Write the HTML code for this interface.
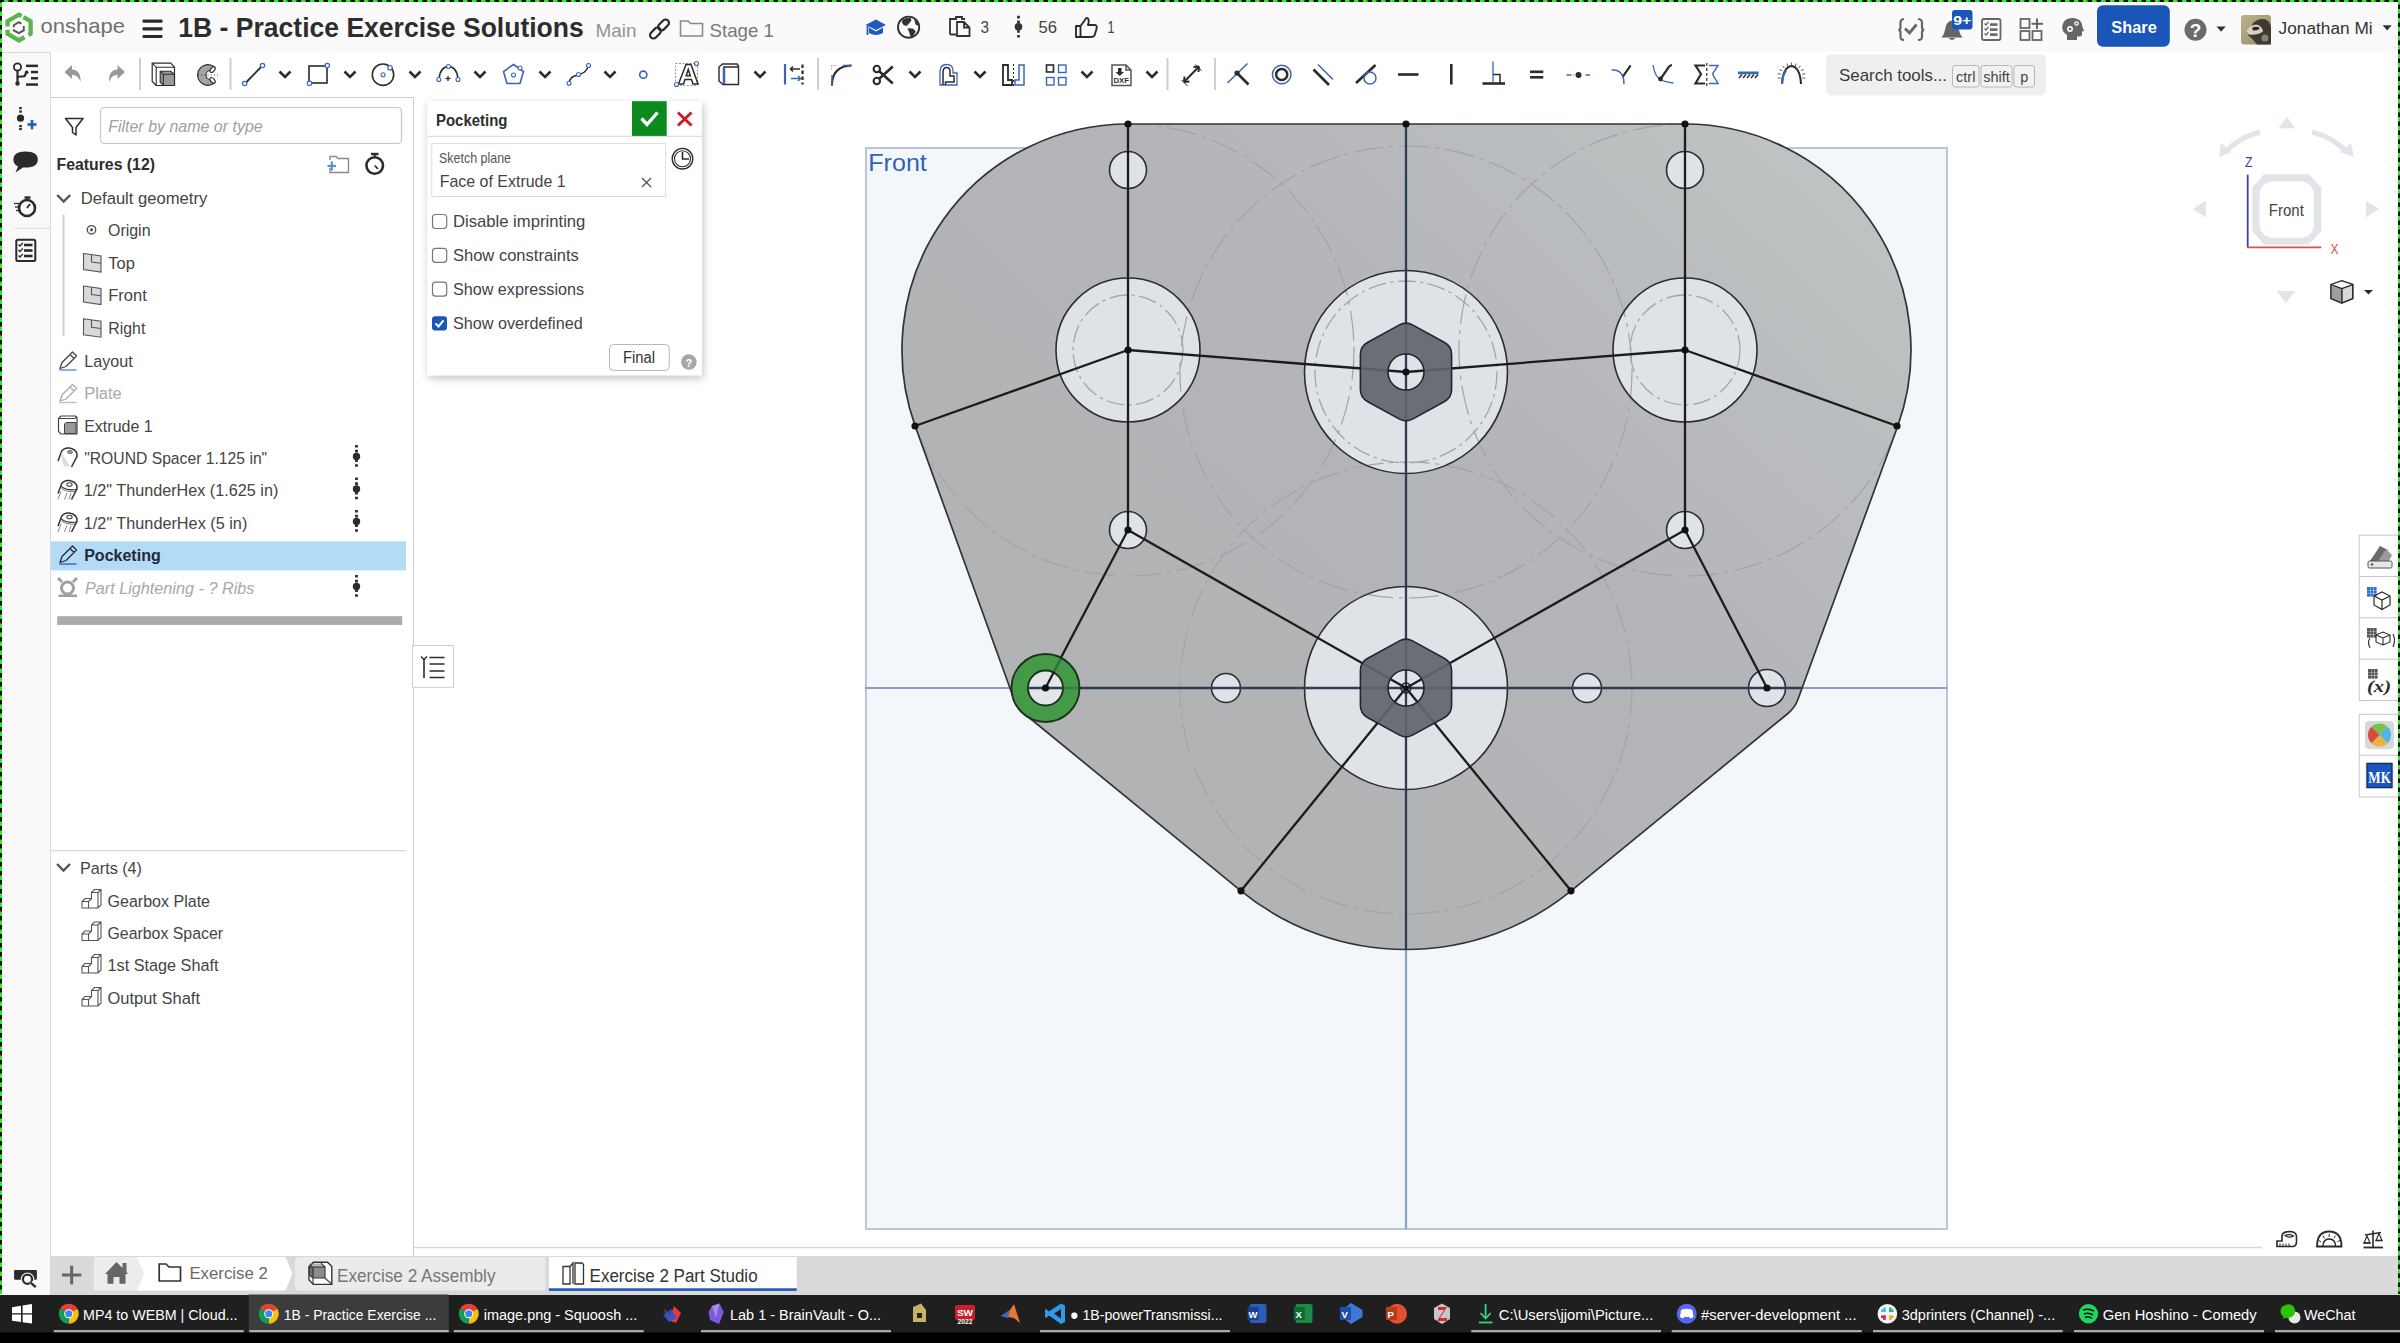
<!DOCTYPE html>
<html><head><meta charset="utf-8">
<style>
*{box-sizing:border-box;margin:0;padding:0}
html,body{width:2400px;height:1343px;overflow:hidden;background:#fff;font-family:"Liberation Sans",sans-serif;color:#333}
.a{position:absolute}
#hdr{left:0;top:0;width:2400px;height:52px;background:#fafafa}
#tb{left:51px;top:52px;width:2349px;height:46px;background:#fff}
#lstrip{left:0;top:52px;width:51px;height:1243px;background:#f9f9f9;border-right:1px solid #d9d9d9;border-top:1px solid #d9d9d9}
#fpanel{left:51px;top:97px;width:363px;height:1159px;background:#fff;border-right:1.5px solid #cdcdcd;border-top:1px solid #cdcdcd}
#tabbar{left:51px;top:1256px;width:2349px;height:39px;background:#d9d9d9}
#task{left:0;top:1295px;width:2400px;height:48px;background:#1f1f1f}
#frame{left:0;top:0;width:2400px;height:1343px;pointer-events:none}
</style></head><body>
<div id="hdr" class="a"></div>
<div id="tb" class="a"></div>
<div id="lstrip" class="a"></div>
<div id="fpanel" class="a"></div>
<div id="tabbar" class="a"></div>
<div id="task" class="a"></div>
<svg class="a" style="left:0;top:0" width="2400" height="1343" viewBox="0 0 2400 1343">
<defs>
<linearGradient id="pg" x1="0.25" y1="0.7" x2="1" y2="0.05"><stop offset="0" stop-color="#b2b3b5"/><stop offset="0.45" stop-color="#b3b5b8"/><stop offset="1" stop-color="#c1c4c5"/></linearGradient>
<clipPath id="pc"><path d="M1128,124 L1685,124 A226,226 0 0 1 1897.7,426.3 L1798.0,699.3 A33,33 0 0 1 1787.9,713.5 L1571.1,890.8 A261.5,261.5 0 0 1 1240.9,890.8 L1024.1,713.5 A33,33 0 0 1 1014.0,699.2 L915.1,425.9 A226,226 0 0 1 1128,124 Z"/></clipPath>
</defs>
<rect x="866" y="148" width="1081" height="1081" fill="#f4f7f9" stroke="#b6c6e0" stroke-width="2"/>
<text x="868.3" y="171" font-family="Liberation Sans" font-size="24" fill="#2f62b9" textLength="58.5" lengthAdjust="spacingAndGlyphs">Front</text>
<line x1="865" y1="688" x2="1947" y2="688" stroke="#88a2c4" stroke-width="2.2"/>
<line x1="1406" y1="124" x2="1406" y2="1229" stroke="#88a2c4" stroke-width="2.2"/>
<path d="M1128,124 L1685,124 A226,226 0 0 1 1897.7,426.3 L1798.0,699.3 A33,33 0 0 1 1787.9,713.5 L1571.1,890.8 A261.5,261.5 0 0 1 1240.9,890.8 L1024.1,713.5 A33,33 0 0 1 1014.0,699.2 L915.1,425.9 A226,226 0 0 1 1128,124 Z" fill="url(#pg)"/>
<circle cx="1128" cy="170" r="18.5" fill="#dfe2e7"/>
<circle cx="1685" cy="170" r="18.5" fill="#dfe2e7"/>
<circle cx="1128" cy="530" r="18.5" fill="#dfe2e7"/>
<circle cx="1685" cy="530" r="18.5" fill="#dfe2e7"/>
<circle cx="1767" cy="688" r="18.5" fill="#dfe2e7"/>
<circle cx="1226" cy="688" r="14.5" fill="#dfe2e7"/>
<circle cx="1587" cy="688" r="14.5" fill="#dfe2e7"/>
<circle cx="1128" cy="350" r="72" fill="#dfe2e7"/>
<circle cx="1685" cy="350" r="72" fill="#dfe2e7"/>
<circle cx="1406" cy="372" r="101.5" fill="#dfe2e7"/>
<circle cx="1406" cy="688" r="101.5" fill="#dfe2e7"/>
<g clip-path="url(#pc)" fill="none" stroke="#a2a4a7" stroke-width="1.2" stroke-dasharray="30 6 4 6">
<circle cx="1128" cy="350" r="226"/>
<circle cx="1685" cy="350" r="226"/>
<circle cx="1406" cy="372" r="226"/>
<circle cx="1406" cy="688" r="226"/>
</g>
<g fill="none" stroke="#a3a5a8" stroke-width="1.3" stroke-dasharray="18 4.5 3 4.5">
<circle cx="1128" cy="350" r="55"/>
<circle cx="1685" cy="350" r="55"/>
<circle cx="1406" cy="372" r="91"/>
</g>
<circle cx="1128" cy="170" r="18.5" fill="none" stroke="#2b2d30" stroke-width="1.6"/>
<circle cx="1685" cy="170" r="18.5" fill="none" stroke="#2b2d30" stroke-width="1.6"/>
<circle cx="1128" cy="530" r="18.5" fill="none" stroke="#2b2d30" stroke-width="1.6"/>
<circle cx="1685" cy="530" r="18.5" fill="none" stroke="#2b2d30" stroke-width="1.6"/>
<circle cx="1767" cy="688" r="18.5" fill="none" stroke="#2b2d30" stroke-width="1.6"/>
<circle cx="1226" cy="688" r="14.5" fill="none" stroke="#2b2d30" stroke-width="1.6"/>
<circle cx="1587" cy="688" r="14.5" fill="none" stroke="#2b2d30" stroke-width="1.6"/>
<circle cx="1128" cy="350" r="72" fill="none" stroke="#2b2d30" stroke-width="1.6"/>
<circle cx="1685" cy="350" r="72" fill="none" stroke="#2b2d30" stroke-width="1.6"/>
<circle cx="1406" cy="372" r="101.5" fill="none" stroke="#2b2d30" stroke-width="1.6"/>
<circle cx="1406" cy="688" r="101.5" fill="none" stroke="#2b2d30" stroke-width="1.6"/>
<path d="M1128,124 L1685,124 A226,226 0 0 1 1897.7,426.3 L1798.0,699.3 A33,33 0 0 1 1787.9,713.5 L1571.1,890.8 A261.5,261.5 0 0 1 1240.9,890.8 L1024.1,713.5 A33,33 0 0 1 1014.0,699.2 L915.1,425.9 A226,226 0 0 1 1128,124 Z" fill="none" stroke="#323336" stroke-width="1.7"/>
<g clip-path="url(#pc)"><line x1="865" y1="688" x2="1947" y2="688" stroke="#2e3c54" stroke-width="2.3"/>
<line x1="1406" y1="124" x2="1406" y2="1229" stroke="#2e3c54" stroke-width="2.3"/></g>
<g stroke="#1c1c1e" stroke-width="2.3" stroke-linecap="round">
<line x1="1128" y1="124" x2="1128" y2="530"/>
<line x1="1685" y1="124" x2="1685" y2="530"/>
<line x1="915" y1="426" x2="1128" y2="350"/>
<line x1="1128" y1="350" x2="1406" y2="372"/>
<line x1="1406" y1="372" x2="1685" y2="350"/>
<line x1="1685" y1="350" x2="1897" y2="426"/>
<line x1="1128" y1="530" x2="1406" y2="688"/>
<line x1="1685" y1="530" x2="1406" y2="688"/>
<line x1="1128" y1="530" x2="1045" y2="688"/>
<line x1="1685" y1="530" x2="1767" y2="688"/>
<line x1="1406" y1="688" x2="1241" y2="890.8"/>
<line x1="1406" y1="688" x2="1571" y2="890.8"/>
</g>
<path d="M1399.0,325.1 Q1406.0,321.2 1413.0,325.1 L1444.6,342.5 Q1451.6,346.4 1451.6,354.4 L1451.6,389.6 Q1451.6,397.6 1444.6,401.5 L1413.0,418.9 Q1406.0,422.8 1399.0,418.9 L1367.4,401.5 Q1360.4,397.6 1360.4,389.6 L1360.4,354.4 Q1360.4,346.4 1367.4,342.5 Z M1424,372 A18,18 0 1 0 1388,372 A18,18 0 1 0 1424,372 Z" fill="#5f646b" fill-opacity="0.92" fill-rule="evenodd" stroke="#23262a" stroke-width="1.6"/>
<path d="M1399.0,641.1 Q1406.0,637.2 1413.0,641.1 L1444.6,658.5 Q1451.6,662.4 1451.6,670.4 L1451.6,705.6 Q1451.6,713.6 1444.6,717.5 L1413.0,734.9 Q1406.0,738.8 1399.0,734.9 L1367.4,717.5 Q1360.4,713.6 1360.4,705.6 L1360.4,670.4 Q1360.4,662.4 1367.4,658.5 Z M1424,688 A18,18 0 1 0 1388,688 A18,18 0 1 0 1424,688 Z" fill="#5f646b" fill-opacity="0.92" fill-rule="evenodd" stroke="#23262a" stroke-width="1.6"/>
<circle cx="1406" cy="688" r="5" fill="none" stroke="#222" stroke-width="1.4"/>
<circle cx="1045.5" cy="688" r="18" fill="#e3e5e9"/>
<path d="M1079.5,688 A34,34 0 1 0 1011.5,688 A34,34 0 1 0 1079.5,688 Z M1063,688 A17.5,17.5 0 1 0 1028,688 A17.5,17.5 0 1 0 1063,688 Z" fill="#449a47" fill-rule="evenodd" stroke="#1b331c" stroke-width="1.9"/>
<line x1="1053.6" y1="672.5" x2="1061.2" y2="657.9" stroke="#1c1c1e" stroke-width="2.3" stroke-opacity="0.35"/>
<line x1="1045.5" y1="688" x2="1053.6" y2="672.5" stroke="#1c1c1e" stroke-width="2.3"/>
<line x1="1028" y1="688" x2="1063" y2="688" stroke="#2e3c54" stroke-width="2.3"/>
<line x1="1063" y1="688" x2="1079.5" y2="688" stroke="#2e3c54" stroke-width="2.3" stroke-opacity="0.35"/>
<circle cx="1128" cy="124" r="3.6" fill="#111"/>
<circle cx="1406" cy="124" r="3.6" fill="#111"/>
<circle cx="1685" cy="124" r="3.6" fill="#111"/>
<circle cx="1128" cy="350" r="3.6" fill="#111"/>
<circle cx="1685" cy="350" r="3.6" fill="#111"/>
<circle cx="915" cy="426" r="3.6" fill="#111"/>
<circle cx="1897" cy="426" r="3.6" fill="#111"/>
<circle cx="1128" cy="530" r="3.6" fill="#111"/>
<circle cx="1685" cy="530" r="3.6" fill="#111"/>
<circle cx="1045.5" cy="688" r="3.6" fill="#111"/>
<circle cx="1767" cy="688" r="3.6" fill="#111"/>
<circle cx="1406" cy="372" r="3.6" fill="#111"/>
<circle cx="1241" cy="890.8" r="3.6" fill="#111"/>
<circle cx="1571" cy="890.8" r="3.6" fill="#111"/>
<circle cx="1406" cy="688" r="2.2" fill="#111"/>
</svg>
<svg class="a" style="left:0;top:0" width="2400" height="1343" viewBox="0 0 2400 1343" font-family="Liberation Sans">
<path d="M7.6,26.5 L7.6,21.2 L19,14.6 L21.5,16" fill="none" stroke="#5bb350" stroke-width="4.3" stroke-linejoin="miter"/>
<path d="M23.5,17.2 L30.6,21.2 L30.6,33.8 L28.5,35" fill="none" stroke="#5bb350" stroke-width="4.3" stroke-linejoin="miter"/>
<path d="M7.6,29.8 L7.6,33.8 L19,40.4 L24.5,37.2" fill="none" stroke="#5bb350" stroke-width="4.3" stroke-linejoin="miter"/>
<path d="M13.8,27.2 L13.8,25.2 L18.8,22.2 L21.5,23.8" fill="none" stroke="#555" stroke-width="1.9" />
<path d="M23.8,26 L23.8,30.4 L18.8,33.2 L13.8,30.4 L13.8,29.2" fill="none" stroke="#555" stroke-width="1.9" />
<text x="40.5" y="32.8" font-size="21" fill="#707070" textLength="84.5" lengthAdjust="spacingAndGlyphs" >onshape</text>
<rect x="142.5" y="19.5" width="20" height="3.2" fill="#2b2b2b" rx="1"/>
<rect x="142.5" y="27.299999999999997" width="20" height="3.2" fill="#2b2b2b" rx="1"/>
<rect x="142.5" y="34.9" width="20" height="3.2" fill="#2b2b2b" rx="1"/>
<text x="178.3" y="36.9" font-size="27.2" fill="#2d2d2d" font-weight="bold" textLength="405.5" lengthAdjust="spacingAndGlyphs" >1B - Practice Exercise Solutions</text>
<text x="595.5" y="36.8" font-size="19" fill="#8e949a" textLength="41" lengthAdjust="spacingAndGlyphs" >Main</text>
<g transform="rotate(-45 659.5 29)" fill="none" stroke="#2b2b2b" stroke-width="2.2"><rect x="647.5" y="25.6" width="12.5" height="6.8" rx="3.4"/><rect x="659" y="25.6" width="12.5" height="6.8" rx="3.4"/></g>
<path d="M680.5,36 L680.5,21 L688,21 L690.5,23.5 L702.5,23.5 L702.5,36 Z" fill="none" stroke="#8a8a8a" stroke-width="1.6" />
<text x="709.5" y="36.8" font-size="18.6" fill="#787878" textLength="64.5" lengthAdjust="spacingAndGlyphs" >Stage 1</text>
<path d="M865.5,25 L876,19.5 L886,25 L876,30 Z" fill="#1f5bbf" stroke="none" stroke-width="1" />
<path d="M869,27.5 L869,33 Q876,37 883,33 L883,27.5 L876,31.5 Z" fill="#1f5bbf" stroke="none" stroke-width="1" />
<line x1="867.5" y1="26" x2="867.5" y2="35" stroke="#1f5bbf" stroke-width="1.8" />
<circle cx="908.6" cy="27.2" r="10.6" fill="none" stroke="#333" stroke-width="1.9" />
<path d="M902.5,19.8 Q906,17.3 910.5,17.8 L911.5,20.5 L909,23.5 L906.5,26 L903.5,25 L902,22.5 Z" fill="#333" stroke="none" stroke-width="1" />
<path d="M907.5,28.2 L912.8,28.5 L915.8,31.2 L913.5,35.5 L910.8,37.3 L909.5,33.2 Z" fill="#333" stroke="none" stroke-width="1" />
<path d="M914.2,19.5 L917.5,22.5 L918.5,26 L915.5,24.5 Z" fill="#333" stroke="none" stroke-width="1" />
<path d="M950,34.5 L950,19 L956,19 L956,17 L962,17 L962,19 L965,19 M957,22 L964,22 L969.5,27.5 L969.5,36 L957,36 Z M964,22 L964,27.5 L969.5,27.5 M950,34.5 L957,34.5" fill="none" stroke="#333" stroke-width="1.8" />
<text x="980.5" y="33.3" font-size="16" fill="#444" textLength="8.5" lengthAdjust="spacingAndGlyphs" >3</text>
<line x1="1018.5" y1="15.8" x2="1018.5" y2="38" stroke="#333" stroke-width="2.8" stroke-dasharray="2.6 2.2"/>
<circle cx="1018.5" cy="26.8" r="3.8" fill="#333" stroke="none" stroke-width="1" />
<text x="1038.5" y="33.3" font-size="16" fill="#444" textLength="18.5" lengthAdjust="spacingAndGlyphs" >56</text>
<path d="M1076,26 L1080.5,26 L1080.5,37 L1076,37 Z M1080.5,26 L1085,20 Q1086,17 1088,18.5 Q1089.5,20.5 1088,25 L1095,25 Q1097.5,25.5 1096.5,29 L1094.5,35.5 Q1093.5,37 1091,37 L1080.5,37" fill="none" stroke="#2b2b2b" stroke-width="1.9" stroke-linejoin="round"/>
<text x="1107.5" y="33.3" font-size="16" fill="#444" textLength="7" lengthAdjust="spacingAndGlyphs" >1</text>
<path d="M1904,19 Q1900,19 1900.5,24 L1900.5,27.5 Q1900.5,29.5 1898.5,29.8 Q1900.5,30.2 1900.5,32 L1900.5,36 Q1900,40 1904,40 M1918,19 Q1922.5,19 1922,24 L1922,27.5 Q1922,29.5 1924,29.8 Q1922,30.2 1922,32 L1922,36 Q1922.5,40 1918,40" fill="none" stroke="#666" stroke-width="2.2" />
<path d="M1905,28.5 L1909.5,33 L1916.5,24.5" fill="none" stroke="#666" stroke-width="2.8" />
<path d="M1941.5,37.5 Q1944,35 1945,30 Q1946,21 1952,20.5 Q1958,21 1959,30 Q1960,35 1962.5,37.5 Z" fill="#666" stroke="none" stroke-width="1" />
<path d="M1948.5,38 Q1952,42 1955.5,38 Z" fill="#666" stroke="none" stroke-width="1" />
<rect x="1952" y="10" width="20.5" height="19.5" fill="#1a55b8" rx="3"/>
<text x="1953.3" y="25" font-size="13" fill="#fff" font-weight="bold" textLength="18" lengthAdjust="spacingAndGlyphs" >9+</text>
<rect x="1982" y="19" width="18.5" height="21" fill="none" stroke="#666" stroke-width="1.8" rx="2"/>
<path d="M1984.5,23.5 L1986,25.0 L1988.5,22.0" fill="none" stroke="#666" stroke-width="1.2" />
<rect x="1990" y="23.3" width="7.5" height="2.6" fill="#666" />
<path d="M1984.5,28.5 L1986,30.0 L1988.5,27.0" fill="none" stroke="#666" stroke-width="1.2" />
<rect x="1990" y="28.3" width="7.5" height="2.6" fill="#666" />
<path d="M1984.5,33.5 L1986,35.0 L1988.5,32.0" fill="none" stroke="#666" stroke-width="1.2" />
<rect x="1990" y="33.3" width="7.5" height="2.6" fill="#666" />
<rect x="2020.5" y="19" width="9" height="9" fill="none" stroke="#666" stroke-width="1.8"/>
<rect x="2020.5" y="31" width="9" height="9" fill="none" stroke="#666" stroke-width="1.8"/>
<rect x="2032.5" y="31" width="9" height="9" fill="none" stroke="#666" stroke-width="1.8"/>
<line x1="2037" y1="18.5" x2="2037" y2="29" stroke="#666" stroke-width="2" />
<line x1="2031.5" y1="23.8" x2="2043" y2="23.8" stroke="#666" stroke-width="2" />
<path d="M2067,40 L2067,35 Q2061,31 2062.5,25 Q2064.5,17.5 2073,18 Q2082,18.5 2082.5,27 L2084,31 L2082,31.5 L2082,35 Q2081.5,37 2077,36.5 L2077,40 Z" fill="#666" stroke="none" stroke-width="1" />
<circle cx="2070" cy="29" r="3" fill="#fafafa" stroke="none" stroke-width="1" />
<circle cx="2070" cy="29" r="1.3" fill="#666" stroke="none" stroke-width="1" />
<circle cx="2076.5" cy="23.5" r="2.3" fill="#fafafa" stroke="none" stroke-width="1" />
<circle cx="2076.5" cy="23.5" r="1" fill="#666" stroke="none" stroke-width="1" />
<rect x="2097" y="5.2" width="72.8" height="41.6" fill="#1a55b8" rx="6"/>
<text x="2111.3" y="32.9" font-size="16.8" fill="#fff" font-weight="bold" textLength="45.5" lengthAdjust="spacingAndGlyphs" >Share</text>
<circle cx="2195.5" cy="29.7" r="11" fill="#6b6b6b" stroke="none" stroke-width="1" />
<text x="2195.5" y="36.5" font-size="19" fill="#fff" font-weight="bold" text-anchor="middle" >?</text>
<path d="M2216.5,26.5 L2225.7,26.5 L2221.1,31.7 Z" fill="#333" stroke="none" stroke-width="1" />
<defs><linearGradient id="av" x1="0" y1="0" x2="1" y2="1"><stop offset="0" stop-color="#bcb48c"/><stop offset="0.6" stop-color="#a39c78"/><stop offset="1" stop-color="#7c7862"/></linearGradient></defs>
<rect x="2241" y="14.9" width="30" height="29.7" fill="url(#av)" rx="3"/>
<path d="M2253,23 Q2259,17.5 2266,19.5 Q2272,23 2271,33 L2271,44.6 L2257,44.6 Q2253,39 2248,35 Z" fill="#3d3a33" stroke="none" stroke-width="1" />
<path d="M2246.5,31 Q2249.5,25.5 2256,24.5 Q2262,25.5 2263,31.5 Q2257,35.5 2249,34.5 Z" fill="#d8d2bf" stroke="none" stroke-width="1" />
<path d="M2252,28 Q2256,25.5 2260,28 Q2258,31 2253,30.5 Z" fill="#2a2824" stroke="none" stroke-width="1" />
<circle cx="2265" cy="38" r="3.5" fill="#9a9585" stroke="none" stroke-width="1" opacity="0.8"/>
<text x="2278.6" y="33.9" font-size="17.3" fill="#333" textLength="94" lengthAdjust="spacingAndGlyphs" >Jonathan Mi</text>
<path d="M2382.6,25.2 L2391.7,25.2 L2387.15,30.4 Z" fill="#333" stroke="none" stroke-width="1" />
<circle cx="17.5" cy="67" r="3.6" fill="none" stroke="#2b2b2b" stroke-width="1.8" />
<line x1="17.5" y1="70.5" x2="17.5" y2="83" stroke="#2b2b2b" stroke-width="2.2" />
<path d="M17.5,78 Q17.5,76.5 20,76.5 L23,76.5 Q25,76.5 25.5,74 L26.5,72" fill="none" stroke="#2b2b2b" stroke-width="2.2" />
<circle cx="26.7" cy="72.3" r="1.8" fill="#2b2b2b" stroke="none" stroke-width="1" />
<circle cx="17.5" cy="83.5" r="2.2" fill="#2b2b2b" stroke="none" stroke-width="1" />
<rect x="26" y="64.6" width="12" height="2.5" fill="#2b2b2b" />
<rect x="31" y="70.8" width="7" height="2.5" fill="#2b2b2b" />
<rect x="31" y="77.0" width="7" height="2.5" fill="#2b2b2b" />
<rect x="26" y="83.3" width="12" height="2.5" fill="#2b2b2b" />
<path d="M64.5,72 L72,65 L72,69.5 Q81,70 80.5,82 Q78,74.5 72,75 L72,79 Z" fill="#999" stroke="none" stroke-width="1" />
<path d="M125,72 L117.5,65 L117.5,69.5 Q108.5,70 109,82 Q111.5,74.5 117.5,75 L117.5,79 Z" fill="#999" stroke="none" stroke-width="1" />
<line x1="140" y1="58" x2="140" y2="90" stroke="#cfcfcf" stroke-width="2" />
<line x1="230.5" y1="58" x2="230.5" y2="90" stroke="#cfcfcf" stroke-width="2" />
<line x1="818" y1="58" x2="818" y2="90" stroke="#cfcfcf" stroke-width="2" />
<line x1="1167.5" y1="58" x2="1167.5" y2="90" stroke="#cfcfcf" stroke-width="2" />
<line x1="1215" y1="58" x2="1215" y2="90" stroke="#cfcfcf" stroke-width="2" />
<path d="M152.2,63.2 L170.7,63.2 L174.5,67.2 L174.5,85.5 L156.2,85.5 L152.2,81.5 Z" fill="#fff" stroke="#2b2b2b" stroke-width="1.2" />
<path d="M152.2,63.2 L156.2,67.3 L174.5,67.3 M156.2,67.3 L156.2,85.5" fill="none" stroke="#2b2b2b" stroke-width="1.1" />
<path d="M160.2,71.2 L170.7,71.2 L174.5,74.3 L174.5,85.5 L163.3,85.5 L160.2,82.3 Z" fill="#9a9a9a" stroke="#2b2b2b" stroke-width="1.1" />
<path d="M160.2,71.2 L163.3,74.3 L174.5,74.3 M163.3,74.3 L163.3,85.5" fill="none" stroke="#2b2b2b" stroke-width="1.1" />
<path d="M214.8,67.2 A10.4,10.4 0 1 0 214.8,82.8 L210.5,79.5 A4.3,4.3 0 0 1 210.5,70.5 Z" fill="#a3a3a3" stroke="#2b2b2b" stroke-width="1.1" />
<ellipse cx="212.6" cy="69.6" rx="3.3" ry="1.9" transform="rotate(-50 212.6 69.6)" fill="#fff" stroke="#2b2b2b" stroke-width="1.1"/>
<ellipse cx="212.6" cy="80.4" rx="3.3" ry="1.9" transform="rotate(50 212.6 80.4)" fill="#fff" stroke="#2b2b2b" stroke-width="1.1"/>
<line x1="198" y1="75" x2="218" y2="75" stroke="#2b2b2b" stroke-width="0.9" stroke-dasharray="1 2.2"/>
<line x1="245.5" y1="83" x2="262" y2="66" stroke="#2b2b2b" stroke-width="1.8" />
<circle cx="244.7" cy="83.5" r="2.2" fill="#fff" stroke="#3b66b8" stroke-width="1.2" />
<circle cx="262.5" cy="65.5" r="2.2" fill="#fff" stroke="#3b66b8" stroke-width="1.2" />
<path d="M279.5,71.5 L285,77 L290.5,71.5" fill="none" stroke="#2b2b2b" stroke-width="2.6" />
<rect x="309" y="66" width="18" height="17" fill="none" stroke="#2b2b2b" stroke-width="1.6"/>
<circle cx="309.5" cy="83.3" r="2.2" fill="#fff" stroke="#3b66b8" stroke-width="1.2" />
<circle cx="327.3" cy="65.5" r="2.2" fill="#fff" stroke="#3b66b8" stroke-width="1.2" />
<path d="M344.5,71.5 L350,77 L355.5,71.5" fill="none" stroke="#2b2b2b" stroke-width="2.6" />
<circle cx="383" cy="74.7" r="10.7" fill="none" stroke="#2b2b2b" stroke-width="1.6" />
<circle cx="383" cy="74.7" r="2" fill="none" stroke="#3b66b8" stroke-width="1.1" />
<circle cx="390" cy="67.7" r="2.2" fill="#fff" stroke="#3b66b8" stroke-width="1.2" />
<path d="M409.5,71.5 L415,77 L420.5,71.5" fill="none" stroke="#2b2b2b" stroke-width="2.6" />
<path d="M439,79 Q440,67 448.5,66.5 Q457,67 458,79" fill="none" stroke="#2b2b2b" stroke-width="1.5" />
<circle cx="438.8" cy="79.5" r="2" fill="#fff" stroke="#3b66b8" stroke-width="1.1" />
<circle cx="448.5" cy="66.5" r="2" fill="#fff" stroke="#3b66b8" stroke-width="1.1" />
<circle cx="458" cy="79.5" r="2" fill="#fff" stroke="#3b66b8" stroke-width="1.1" />
<line x1="445.5" y1="78.5" x2="450.5" y2="78.5" stroke="#2b2b2b" stroke-width="1.3" />
<line x1="448" y1="76" x2="448" y2="81" stroke="#2b2b2b" stroke-width="1.3" />
<path d="M474.5,71.5 L480,77 L485.5,71.5" fill="none" stroke="#2b2b2b" stroke-width="2.6" />
<path d="M513.5,64.5 L523.5,71.5 L520,83.5 L507,83.5 L503.5,71.5 Z" fill="none" stroke="#3b66b8" stroke-width="1.6" />
<circle cx="513.5" cy="75" r="2" fill="none" stroke="#3b66b8" stroke-width="1.1" />
<circle cx="520" cy="68" r="2" fill="#fff" stroke="#3b66b8" stroke-width="1.1" />
<path d="M539.5,71.5 L545,77 L550.5,71.5" fill="none" stroke="#2b2b2b" stroke-width="2.6" />
<path d="M569,83 Q570,77 576,75.5 Q581,74.5 584.5,72 Q587.5,69 588.5,66" fill="none" stroke="#2b2b2b" stroke-width="1.5" />
<circle cx="569" cy="83.3" r="2" fill="#fff" stroke="#3b66b8" stroke-width="1.1" />
<circle cx="578.5" cy="74.5" r="2" fill="#fff" stroke="#3b66b8" stroke-width="1.1" />
<circle cx="588.5" cy="65.5" r="2" fill="#fff" stroke="#3b66b8" stroke-width="1.1" />
<path d="M604.5,71.5 L610,77 L615.5,71.5" fill="none" stroke="#2b2b2b" stroke-width="2.6" />
<circle cx="643.3" cy="74.7" r="3.6" fill="none" stroke="#3b66b8" stroke-width="1.6" />
<rect x="675.5" y="63.5" width="22" height="22" fill="none" stroke="#999" stroke-width="1" stroke-dasharray="2 1.5"/>
<path d="M678.5,84 L686,64.5 L691,64.5 L698,84 L693,84 L691.5,79.5 L685,79.5 L683.5,84 Z M686.2,75.7 L690.3,75.7 L688.25,69.5 Z" fill="#fff" stroke="#2b2b2b" stroke-width="1.5" />
<circle cx="696.5" cy="63.5" r="2" fill="#fff" stroke="#3b66b8" stroke-width="1.1" />
<circle cx="676.5" cy="84.5" r="2" fill="#fff" stroke="#3b66b8" stroke-width="1.1" />
<path d="M719,67 L722.5,64 L737,64 L738.5,66 L738.5,84.5 L723,84.5 L719,81 Z M723,67 L738.5,67" fill="none" stroke="#2b2b2b" stroke-width="1.4" />
<line x1="724" y1="67.5" x2="724" y2="84" stroke="#3b66b8" stroke-width="2.5" />
<path d="M754.5,71.5 L760,77 L765.5,71.5" fill="none" stroke="#2b2b2b" stroke-width="2.6" />
<line x1="785" y1="64" x2="785" y2="84.5" stroke="#3b66b8" stroke-width="2.2" />
<path d="M800,69 L791,69 M793,66.5 L790.5,69 L793,71.5" fill="none" stroke="#2b2b2b" stroke-width="1.5" />
<path d="M791,78.5 L800,78.5 M798,76 L800.5,78.5 L798,81" fill="none" stroke="#3b66b8" stroke-width="1.5" />
<line x1="802.5" y1="64.5" x2="802.5" y2="84.5" stroke="#2b2b2b" stroke-width="2.2" stroke-dasharray="3.5 2.5"/>
<path d="M832,85.5 Q832,66 851.5,65.5" fill="none" stroke="#2b2b2b" stroke-width="2" />
<line x1="832" y1="75" x2="832" y2="86" stroke="#3b66b8" stroke-width="1.5" />
<line x1="843" y1="65.5" x2="851.5" y2="65.5" stroke="#3b66b8" stroke-width="1.5" />
<line x1="831.5" y1="65.5" x2="837" y2="65.5" stroke="#999" stroke-width="0.8" stroke-dasharray="1.5 1"/>
<line x1="831.5" y1="65.5" x2="831.5" y2="70" stroke="#999" stroke-width="0.8" stroke-dasharray="1.5 1"/>
<circle cx="876.8" cy="69" r="3.2" fill="none" stroke="#2b2b2b" stroke-width="2.1" />
<circle cx="876.8" cy="81" r="3.2" fill="none" stroke="#2b2b2b" stroke-width="2.1" />
<path d="M879.5,71.5 L892.8,83.5 M879.5,78.5 L892.8,66.5" fill="none" stroke="#2b2b2b" stroke-width="2.6" />
<path d="M909.5,71.5 L915,77 L920.5,71.5" fill="none" stroke="#2b2b2b" stroke-width="2.6" />
<path d="M940,85 L940,72 Q940,64.5 946.5,64.5 Q953,64.5 953,70.5 L953,73 L957,73 L957,85 Z" fill="none" stroke="#3b66b8" stroke-width="1.3" />
<path d="M943,85 L943,72.5 Q943,67.5 946.5,67.5 Q950,67.5 950,71 L950,76 L954,76 L954,82 L945.5,82 L945.5,85" fill="none" stroke="#2b2b2b" stroke-width="1.5" />
<path d="M974.5,71.5 L980,77 L985.5,71.5" fill="none" stroke="#2b2b2b" stroke-width="2.6" />
<path d="M1003,65 L1008,65 L1008,80 L1012,80 L1012,85 L1003,85 Z" fill="none" stroke="#2b2b2b" stroke-width="1.8" />
<line x1="1013.5" y1="64" x2="1013.5" y2="86" stroke="#2b2b2b" stroke-width="1" stroke-dasharray="2 2"/>
<path d="M1024,65 L1019,65 L1019,80 L1015,80 L1015,85 L1024,85 Z" fill="none" stroke="#3b66b8" stroke-width="1.5" />
<rect x="1046.5" y="65" width="7" height="7" fill="none" stroke="#2b2b2b" stroke-width="1.6"/>
<rect x="1058.5" y="65" width="7.5" height="7.5" fill="none" stroke="#3b66b8" stroke-width="1.4"/>
<rect x="1046.5" y="77.5" width="7.5" height="7.5" fill="none" stroke="#3b66b8" stroke-width="1.4"/>
<rect x="1058.5" y="77.5" width="7.5" height="7.5" fill="none" stroke="#3b66b8" stroke-width="1.4"/>
<path d="M1081.5,71.5 L1087,77 L1092.5,71.5" fill="none" stroke="#2b2b2b" stroke-width="2.6" />
<path d="M1112,65 L1126,65 L1131,70 L1131,85.5 L1112,85.5 Z M1126,65 L1126,70 L1131,70" fill="none" stroke="#555" stroke-width="1.5" />
<path d="M1118,68 L1121.5,68 L1121.5,72 L1124,72 L1119.8,76 L1115.5,72 L1118,72 Z" fill="#2b2b2b" stroke="none" stroke-width="1" />
<text x="1113.5" y="83.3" font-size="7.5" fill="#2b2b2b" font-weight="bold" textLength="15.5" lengthAdjust="spacingAndGlyphs" >DXF</text>
<path d="M1146.5,71.5 L1152,77 L1157.5,71.5" fill="none" stroke="#2b2b2b" stroke-width="2.6" />
<line x1="1184" y1="82" x2="1199" y2="66.5" stroke="#2b2b2b" stroke-width="2" />
<path d="M1184,82 L1184.5,76.5 M1184,82 L1189.5,81.5 M1199,66.5 L1193.5,67 M1199,66.5 L1198.5,72" fill="none" stroke="#2b2b2b" stroke-width="2" />
<line x1="1181.5" y1="80" x2="1187.5" y2="86" stroke="#2b2b2b" stroke-width="1" />
<line x1="1195.5" y1="64.5" x2="1201.5" y2="70.5" stroke="#2b2b2b" stroke-width="1" />
<line x1="1227.5" y1="83" x2="1247.5" y2="63.5" stroke="#3b66b8" stroke-width="1.5" />
<line x1="1237" y1="73" x2="1248.5" y2="84.5" stroke="#2b2b2b" stroke-width="2.6" />
<circle cx="1237" cy="73" r="2.6" fill="#2b2b2b" stroke="none" stroke-width="1" />
<circle cx="1281.7" cy="74.5" r="9.3" fill="none" stroke="#3b66b8" stroke-width="1.5" />
<circle cx="1281.7" cy="74.5" r="5.6" fill="none" stroke="#2b2b2b" stroke-width="2.5" />
<line x1="1313.5" y1="69.5" x2="1329" y2="85" stroke="#2b2b2b" stroke-width="2.6" />
<line x1="1318" y1="64.5" x2="1333" y2="79.5" stroke="#3b66b8" stroke-width="1.5" />
<line x1="1356" y1="83" x2="1375.5" y2="65" stroke="#2b2b2b" stroke-width="2.6" />
<circle cx="1370" cy="78" r="6" fill="none" stroke="#3b66b8" stroke-width="1.5" />
<line x1="1398" y1="74.5" x2="1418.5" y2="74.5" stroke="#2b2b2b" stroke-width="2.6" />
<line x1="1451.3" y1="64" x2="1451.3" y2="84.5" stroke="#2b2b2b" stroke-width="2.6" />
<line x1="1482.5" y1="83.5" x2="1505" y2="83.5" stroke="#2b2b2b" stroke-width="2.6" />
<line x1="1493" y1="61.5" x2="1493" y2="83" stroke="#3b66b8" stroke-width="1.3" />
<path d="M1493,74.5 L1500,74.5 L1500,83" fill="none" stroke="#2b2b2b" stroke-width="1.5" />
<rect x="1530" y="70.5" width="13.3" height="2.6" fill="#2b2b2b" />
<rect x="1530" y="76" width="13.3" height="2.6" fill="#2b2b2b" />
<line x1="1566.5" y1="75" x2="1571.5" y2="75" stroke="#3b66b8" stroke-width="1.5" />
<line x1="1573.5" y1="75" x2="1574" y2="75" stroke="#3b66b8" stroke-width="1.5" />
<line x1="1585.5" y1="75" x2="1590" y2="75" stroke="#3b66b8" stroke-width="1.5" />
<circle cx="1578.5" cy="75" r="3" fill="#2b2b2b" stroke="none" stroke-width="1" />
<path d="M1611.5,70 Q1620,69 1623,76.5 L1630.5,65.5" fill="none" stroke="#3b66b8" stroke-width="1.5" />
<line x1="1623" y1="76.5" x2="1630.5" y2="65.5" stroke="#2b2b2b" stroke-width="2.2" />
<path d="M1623,76.5 Q1624,80 1624,84" fill="none" stroke="#3b66b8" stroke-width="1.5" />
<path d="M1653,65 Q1655,77 1660.5,79.5 Q1665,82 1673.5,83" fill="none" stroke="#3b66b8" stroke-width="1.3" />
<path d="M1660.5,79 L1667.5,69 Q1669,65.5 1672,65" fill="none" stroke="#2b2b2b" stroke-width="2.2" />
<circle cx="1660.5" cy="79" r="2.4" fill="#2b2b2b" stroke="none" stroke-width="1" />
<path d="M1705,65.5 L1695.5,65.5 L1701,74 L1695.5,83.5 L1705,83.5" fill="none" stroke="#2b2b2b" stroke-width="2.2" />
<path d="M1709,65.5 L1718,65.5 L1712.5,74 L1718,83.5 L1709,83.5" fill="none" stroke="#3b66b8" stroke-width="1.4" />
<line x1="1706.8" y1="63" x2="1706.8" y2="86" stroke="#2b2b2b" stroke-width="1.2" stroke-dasharray="3 2"/>
<rect x="1738" y="71.5" width="20.5" height="2.8" fill="#3b66b8" />
<line x1="1739" y1="78" x2="1742" y2="74.5" stroke="#2b2b2b" stroke-width="1.4" />
<line x1="1743" y1="78" x2="1746" y2="74.5" stroke="#2b2b2b" stroke-width="1.4" />
<line x1="1747" y1="78" x2="1750" y2="74.5" stroke="#2b2b2b" stroke-width="1.4" />
<line x1="1751" y1="78" x2="1754" y2="74.5" stroke="#2b2b2b" stroke-width="1.4" />
<line x1="1755" y1="78" x2="1758" y2="74.5" stroke="#2b2b2b" stroke-width="1.4" />
<path d="M1782,84 Q1783,67 1791.5,66 Q1800,67 1801,84" fill="none" stroke="#2b2b2b" stroke-width="2" />
<path d="M1782,84 Q1782.5,75 1786,70.5" fill="none" stroke="#3b66b8" stroke-width="2.2" />
<line x1="1780.6671147168656" y1="77.81462345661943" x2="1777.7126914578291" y2="78.30952076297018" stroke="#555" stroke-width="1" />
<line x1="1780.6671147168656" y1="74.18537654338058" x2="1777.7126914578291" y2="73.69047923702983" stroke="#555" stroke-width="1" />
<line x1="1781.9737205583713" y1="70.775" x2="1779.375644347018" y2="69.35" stroke="#555" stroke-width="1" />
<line x1="1784.4293362934482" y1="67.99483556940667" x2="1782.5009734643884" y2="65.81160890651759" stroke="#555" stroke-width="1" />
<line x1="1787.7377784234177" y1="66.18021211278726" x2="1786.7117179934407" y2="63.50208814354742" stroke="#555" stroke-width="1" />
<line x1="1791.5" y1="65.55" x2="1791.5" y2="62.7" stroke="#555" stroke-width="1" />
<line x1="1795.2622215765823" y1="66.18021211278726" x2="1796.2882820065593" y2="63.50208814354742" stroke="#555" stroke-width="1" />
<line x1="1798.5706637065518" y1="67.99483556940667" x2="1800.4990265356116" y2="65.81160890651759" stroke="#555" stroke-width="1" />
<line x1="1801.0262794416287" y1="70.775" x2="1803.624355652982" y2="69.35" stroke="#555" stroke-width="1" />
<line x1="1802.3328852831344" y1="74.18537654338058" x2="1805.2873085421709" y2="73.69047923702982" stroke="#555" stroke-width="1" />
<line x1="1802.3328852831344" y1="77.81462345661942" x2="1805.2873085421709" y2="78.30952076297018" stroke="#555" stroke-width="1" />
<rect x="1826" y="54.5" width="220" height="41" fill="#efefef" rx="5"/>
<text x="1839" y="80.8" font-size="16.6" fill="#3a3a3a" textLength="108" lengthAdjust="spacingAndGlyphs" >Search tools...</text>
<rect x="1952.5" y="65.5" width="26.5" height="21.5" fill="#f2f2f2" rx="2.5" stroke="#b8b8b8" stroke-width="1"/>
<text x="1965.75" y="81.5" font-size="14.5" fill="#444" text-anchor="middle" >ctrl</text>
<rect x="1981" y="65.5" width="31" height="21.5" fill="#f2f2f2" rx="2.5" stroke="#b8b8b8" stroke-width="1"/>
<text x="1996.5" y="81.5" font-size="14.5" fill="#444" text-anchor="middle" >shift</text>
<rect x="2014" y="65.5" width="20.5" height="21.5" fill="#f2f2f2" rx="2.5" stroke="#b8b8b8" stroke-width="1"/>
<text x="2024.25" y="81.5" font-size="14.5" fill="#444" text-anchor="middle" >p</text>
</svg>
<svg class="a" style="left:0;top:0" width="2400" height="1343" viewBox="0 0 2400 1343" font-family="Liberation Sans">
<rect x="19.2" y="107" width="2.6" height="2.2" fill="#2b2b2b" />
<rect x="19.2" y="110.5" width="2.6" height="2.2" fill="#2b2b2b" />
<rect x="19.2" y="125" width="2.6" height="2.2" fill="#2b2b2b" />
<rect x="19.2" y="128" width="2.6" height="2.2" fill="#2b2b2b" />
<circle cx="20.5" cy="118.2" r="3.6" fill="#2b2b2b" stroke="none" stroke-width="1" />
<line x1="27.5" y1="124.5" x2="36.5" y2="124.5" stroke="#1f5bbf" stroke-width="2.6" />
<line x1="32" y1="120" x2="32" y2="129.3" stroke="#1f5bbf" stroke-width="2.6" />
<path d="M25.5,151.5 Q37.8,151.5 37.8,159.5 Q37.8,167.5 25.5,167.5 L23,167.5 L15.5,172.5 L18,166.5 Q13.4,164.5 13.4,159.5 Q13.4,151.5 25.5,151.5 Z" fill="#2b2b2b" stroke="none" stroke-width="1" />
<circle cx="27" cy="208" r="8" fill="none" stroke="#2b2b2b" stroke-width="2.6" />
<line x1="24.5" y1="197.5" x2="30.5" y2="197.5" stroke="#2b2b2b" stroke-width="2.4" />
<line x1="27.5" y1="197" x2="27.5" y2="200" stroke="#2b2b2b" stroke-width="2" />
<line x1="27" y1="208" x2="30" y2="204" stroke="#2b2b2b" stroke-width="1.8" />
<line x1="14" y1="203.5" x2="19" y2="203.5" stroke="#2b2b2b" stroke-width="1.3" />
<line x1="15" y1="207" x2="20" y2="207" stroke="#2b2b2b" stroke-width="1.3" />
<line x1="16" y1="210.5" x2="21" y2="210.5" stroke="#2b2b2b" stroke-width="1.3" />
<line x1="14.5" y1="228.3" x2="50" y2="228.3" stroke="#dcdcdc" stroke-width="1" />
<rect x="16.3" y="239.8" width="19" height="21.2" fill="none" stroke="#2b2b2b" stroke-width="2" rx="1.5"/>
<path d="M18.5,244.5 L20,246 L22.8,243" fill="none" stroke="#2b2b2b" stroke-width="1.3" />
<rect x="24" y="243.7" width="8.5" height="2.6" fill="#2b2b2b" />
<path d="M18.5,250.0 L20,251.5 L22.8,248.5" fill="none" stroke="#2b2b2b" stroke-width="1.3" />
<rect x="24" y="249.2" width="8.5" height="2.6" fill="#2b2b2b" />
<path d="M18.5,255.5 L20,257 L22.8,254" fill="none" stroke="#2b2b2b" stroke-width="1.3" />
<rect x="24" y="254.7" width="8.5" height="2.6" fill="#2b2b2b" />
<rect x="14.1" y="1270" width="22.8" height="9.7" fill="#2b2b2b" rx="1"/>
<circle cx="27.5" cy="1279.3" r="6.8" fill="#f9f9f9" stroke="none" stroke-width="1" />
<circle cx="27.5" cy="1279.3" r="4.6" fill="#f9f9f9" stroke="#2b2b2b" stroke-width="2.3" />
<line x1="30.8" y1="1282.8" x2="35.8" y2="1287.2" stroke="#f9f9f9" stroke-width="4.5" />
<line x1="30.8" y1="1282.8" x2="35.8" y2="1287.2" stroke="#2b2b2b" stroke-width="2.4" />
<path d="M65.5,118.5 L83,118.5 L76,127.5 L76,135 L72.5,132.5 L72.5,127.5 Z" fill="none" stroke="#2b2b2b" stroke-width="1.5" stroke-linejoin="round"/>
<rect x="100.5" y="107.5" width="301" height="36" fill="#fff" rx="4" stroke="#c6c6c6" stroke-width="1.2"/>
<text x="108.2" y="132" font-size="16.5" fill="#a0a0a0" font-style="italic" textLength="154.5" lengthAdjust="spacingAndGlyphs" >Filter by name or type</text>
<text x="56.5" y="169.5" font-size="17.2" fill="#2d2d2d" font-weight="bold" textLength="98.5" lengthAdjust="spacingAndGlyphs" >Features (12)</text>
<path d="M330,160 L330,156.5 L336,156.5 L338,158.5 L348.5,158.5 L348.5,172.5 L330,172.5 L330,168" fill="none" stroke="#8a8a8a" stroke-width="1.4" />
<line x1="327.5" y1="166" x2="336" y2="166" stroke="#5b8ed6" stroke-width="2.2" />
<line x1="331.8" y1="161.5" x2="331.8" y2="170.5" stroke="#5b8ed6" stroke-width="2.2" />
<circle cx="374.7" cy="165.5" r="8.3" fill="none" stroke="#2b2b2b" stroke-width="2.6" />
<line x1="371" y1="154" x2="378.5" y2="154" stroke="#2b2b2b" stroke-width="2.4" />
<line x1="374.7" y1="154" x2="374.7" y2="157" stroke="#2b2b2b" stroke-width="2" />
<line x1="374.7" y1="165.5" x2="378" y2="169" stroke="#2b2b2b" stroke-width="1.8" />
<path d="M57.2,195 L63.7,201.5 L70.2,195" fill="none" stroke="#555" stroke-width="2.4" />
<text x="80.8" y="204.4" font-size="17.2" fill="#444" textLength="126.5" lengthAdjust="spacingAndGlyphs" >Default geometry</text>
<line x1="63.5" y1="214.5" x2="63.5" y2="336" stroke="#d0d0d0" stroke-width="2" />
<circle cx="91.5" cy="229.8" r="4.2" fill="none" stroke="#555" stroke-width="1.4" />
<circle cx="91.5" cy="229.8" r="1.6" fill="#555" stroke="none" stroke-width="1" />
<text x="108" y="236.3" font-size="17.2" fill="#444" textLength="42.5" lengthAdjust="spacingAndGlyphs" >Origin</text>
<path d="M83.5,253.5 L101,256.0 L101,272.0 L83.5,269.5 Z" fill="#d9d9d9" stroke="#555" stroke-width="1.1" />
<path d="M91.5,254.7 L91.5,262.0 L101,263.3" fill="none" stroke="#555" stroke-width="1.1" />
<text x="108.3" y="268.8" font-size="17.2" fill="#444" textLength="26.5" lengthAdjust="spacingAndGlyphs" >Top</text>
<path d="M83.5,286 L101,288.5 L101,304.5 L83.5,302 Z" fill="#d9d9d9" stroke="#555" stroke-width="1.1" />
<path d="M91.5,287.2 L91.5,294.5 L101,295.8" fill="none" stroke="#555" stroke-width="1.1" />
<text x="108.3" y="301" font-size="17.2" fill="#444" textLength="38.5" lengthAdjust="spacingAndGlyphs" >Front</text>
<path d="M83.5,318.7 L101,321.2 L101,337.2 L83.5,334.7 Z" fill="#d9d9d9" stroke="#555" stroke-width="1.1" />
<path d="M91.5,319.9 L91.5,327.2 L101,328.5" fill="none" stroke="#555" stroke-width="1.1" />
<text x="108.3" y="333.8" font-size="17.2" fill="#444" textLength="37" lengthAdjust="spacingAndGlyphs" >Right</text>
<path d="M60,368.5 L62,362.5 L72.5,352.0 L76.5,356.0 L66,366.5 Z M70,354.5 L74,358.5" fill="none" stroke="#444" stroke-width="1.3" stroke-linejoin="round"/>
<line x1="59" y1="370.0" x2="76.5" y2="370.0" stroke="#5b8ed6" stroke-width="1.4" />
<text x="84.2" y="366.5" font-size="17.2" fill="#444" textLength="48.5" lengthAdjust="spacingAndGlyphs" >Layout</text>
<path d="M60,401 L62,395 L72.5,384.5 L76.5,388.5 L66,399 Z M70,387 L74,391" fill="none" stroke="#aaa" stroke-width="1.3" stroke-linejoin="round"/>
<line x1="59" y1="402.5" x2="76.5" y2="402.5" stroke="#a9c0e6" stroke-width="1.4" />
<text x="84.2" y="399.2" font-size="17.2" fill="#a8a8a8" textLength="37.5" lengthAdjust="spacingAndGlyphs" >Plate</text>
<path d="M58.5,418.5 L61,416 L75.5,416 L77,418 L77,434 L61,434 L58.5,431.5 Z M58.5,418.5 L75,418.5 M75,418.5 L77,416" fill="#fff" stroke="#444" stroke-width="1.2" />
<path d="M64.5,424 L66,422.5 L76,422.5 L76,433.5 L64.5,433.5 Z" fill="#9a9a9a" stroke="#444" stroke-width="1" />
<text x="84.2" y="431.5" font-size="17.2" fill="#444" textLength="68.5" lengthAdjust="spacingAndGlyphs" >Extrude 1</text>
<path d="M58,461.0 L61.5,451.5 Q64,447.5 69.5,448.1 Q76,449.3 77,454.0 Q77.3,456.5 76.2,458.0 L71.5,467.0" fill="none" stroke="#333" stroke-width="1.5" />
<ellipse cx="70" cy="452.0" rx="2.6" ry="1.6" fill="#999" stroke="#666" stroke-width="0.8"/>
<path d="M61.5,452.5 Q61,459.5 64,466.5 L70,466.5" fill="#ddd" stroke="none" stroke-width="1" />
<text x="84.2" y="464" font-size="17.2" fill="#444" textLength="183" lengthAdjust="spacingAndGlyphs" >&quot;ROUND Spacer 1.125 in&quot;</text>
<path d="M58,493.5 L61.5,484 Q64,480 69.5,480.6 Q76,481.8 77,486.5 Q77.3,489 76.2,490.5 L71.5,499.5" fill="none" stroke="#333" stroke-width="1.5" />
<path d="M61.3,486.5 Q67,491 76,489.5" fill="none" stroke="#333" stroke-width="1.1" />
<path d="M61.5,488.5 Q67,492.5 75.3,491.5" fill="none" stroke="#666" stroke-width="0.9" />
<ellipse cx="69.5" cy="484.5" rx="2.6" ry="1.8" fill="none" stroke="#444" stroke-width="1.1"/>
<path d="M58,499.5 L61,491 M64.5,499.5 L67,493 M69,499.5 L71,493" fill="none" stroke="#999" stroke-width="1.1" />
<text x="83.8" y="496" font-size="17.2" fill="#444" textLength="194.5" lengthAdjust="spacingAndGlyphs" >1/2&quot; ThunderHex (1.625 in)</text>
<path d="M58,526.0 L61.5,516.5 Q64,512.5 69.5,513.1 Q76,514.3 77,519.0 Q77.3,521.5 76.2,523.0 L71.5,532.0" fill="none" stroke="#333" stroke-width="1.5" />
<path d="M61.3,519.0 Q67,523.5 76,522.0" fill="none" stroke="#333" stroke-width="1.1" />
<path d="M61.5,521.0 Q67,525.0 75.3,524.0" fill="none" stroke="#666" stroke-width="0.9" />
<ellipse cx="69.5" cy="517.0" rx="2.6" ry="1.8" fill="none" stroke="#444" stroke-width="1.1"/>
<path d="M58,532.0 L61,523.5 M64.5,532.0 L67,525.5 M69,532.0 L71,525.5" fill="none" stroke="#999" stroke-width="1.1" />
<text x="83.8" y="528.7" font-size="17.2" fill="#444" textLength="163.5" lengthAdjust="spacingAndGlyphs" >1/2&quot; ThunderHex (5 in)</text>
<line x1="356.5" y1="445.0" x2="356.5" y2="468.0" stroke="#2b2b2b" stroke-width="2.8" stroke-dasharray="2.6 2.2"/>
<circle cx="356.5" cy="456.5" r="3.7" fill="#2b2b2b" stroke="none" stroke-width="1" />
<line x1="356.5" y1="477.5" x2="356.5" y2="500.5" stroke="#2b2b2b" stroke-width="2.8" stroke-dasharray="2.6 2.2"/>
<circle cx="356.5" cy="489" r="3.7" fill="#2b2b2b" stroke="none" stroke-width="1" />
<line x1="356.5" y1="510.0" x2="356.5" y2="533.0" stroke="#2b2b2b" stroke-width="2.8" stroke-dasharray="2.6 2.2"/>
<circle cx="356.5" cy="521.5" r="3.7" fill="#2b2b2b" stroke="none" stroke-width="1" />
<line x1="356.5" y1="575.0" x2="356.5" y2="598.0" stroke="#2b2b2b" stroke-width="2.8" stroke-dasharray="2.6 2.2"/>
<circle cx="356.5" cy="586.5" r="3.7" fill="#2b2b2b" stroke="none" stroke-width="1" />
<rect x="51" y="541.3" width="355" height="29.1" fill="#b3dbf6" />
<path d="M60,562.5 L62,556.5 L72.5,546.0 L76.5,550.0 L66,560.5 Z M70,548.5 L74,552.5" fill="none" stroke="#2b2b2b" stroke-width="1.3" stroke-linejoin="round"/>
<line x1="59" y1="564.0" x2="76.5" y2="564.0" stroke="#3b66b8" stroke-width="1.4" />
<text x="84.2" y="561" font-size="17.2" fill="#1f2a36" font-weight="bold" textLength="76.5" lengthAdjust="spacingAndGlyphs" >Pocketing</text>
<path d="M58.5,594.5 L77,594.5 L77,597 L58.5,597 Z" fill="#a0a0a0" stroke="none" stroke-width="1" />
<circle cx="67.5" cy="588" r="6" fill="none" stroke="#a0a0a0" stroke-width="3" />
<path d="M58,578 L62,582 M77,578 L73,582" fill="none" stroke="#a0a0a0" stroke-width="3" />
<text x="84.9" y="593.5" font-size="17.2" fill="#a8a8a8" font-style="italic" textLength="169.5" lengthAdjust="spacingAndGlyphs" >Part Lightening - ? Ribs</text>
<rect x="57.2" y="616.2" width="345" height="8.7" fill="#ababab" />
<line x1="51" y1="850.7" x2="406" y2="850.7" stroke="#d8d8d8" stroke-width="1.2" />
<path d="M57,864 L63.5,870.5 L70,864" fill="none" stroke="#555" stroke-width="2.4" />
<text x="80" y="874.4" font-size="17.2" fill="#444" textLength="62" lengthAdjust="spacingAndGlyphs" >Parts (4)</text>
<path d="M82,908.0 L82,901.5 L85,898.5 L91.5,898.5 L91.5,892.5 L94.5,889.5 L101,889.5 L101,905.0 L98,908.0 Z M82,901.5 L88.5,901.5 L88.5,908.0 M88.5,901.5 L91.5,898.5 M91.5,892.5 L98,892.5 L98,908.0 M98,892.5 L101,889.5" fill="none" stroke="#555" stroke-width="1.1" />
<text x="107.5" y="906.5" font-size="17.2" fill="#444" textLength="102.5" lengthAdjust="spacingAndGlyphs" >Gearbox Plate</text>
<path d="M82,940.5 L82,934 L85,931 L91.5,931 L91.5,925 L94.5,922 L101,922 L101,937.5 L98,940.5 Z M82,934 L88.5,934 L88.5,940.5 M88.5,934 L91.5,931 M91.5,925 L98,925 L98,940.5 M98,925 L101,922" fill="none" stroke="#555" stroke-width="1.1" />
<text x="107.5" y="939" font-size="17.2" fill="#444" textLength="115.5" lengthAdjust="spacingAndGlyphs" >Gearbox Spacer</text>
<path d="M82,973.0 L82,966.5 L85,963.5 L91.5,963.5 L91.5,957.5 L94.5,954.5 L101,954.5 L101,970.0 L98,973.0 Z M82,966.5 L88.5,966.5 L88.5,973.0 M88.5,966.5 L91.5,963.5 M91.5,957.5 L98,957.5 L98,973.0 M98,957.5 L101,954.5" fill="none" stroke="#555" stroke-width="1.1" />
<text x="107.5" y="971.2" font-size="17.2" fill="#444" textLength="111" lengthAdjust="spacingAndGlyphs" >1st Stage Shaft</text>
<path d="M82,1006.0 L82,999.5 L85,996.5 L91.5,996.5 L91.5,990.5 L94.5,987.5 L101,987.5 L101,1003.0 L98,1006.0 Z M82,999.5 L88.5,999.5 L88.5,1006.0 M88.5,999.5 L91.5,996.5 M91.5,990.5 L98,990.5 L98,1006.0 M98,990.5 L101,987.5" fill="none" stroke="#555" stroke-width="1.1" />
<text x="107.5" y="1004.2" font-size="17.2" fill="#444" textLength="92.5" lengthAdjust="spacingAndGlyphs" >Output Shaft</text>
<rect x="412.5" y="645.5" width="41" height="41.8" fill="#fff" stroke="#cfcfcf" stroke-width="1"/>
<line x1="424" y1="659" x2="424" y2="678" stroke="#2b2b2b" stroke-width="1.6" />
<path d="M421,656.5 L424,659.5 L427,656.5" fill="none" stroke="#2b2b2b" stroke-width="1.4" />
<line x1="429.5" y1="657.5" x2="444.5" y2="657.5" stroke="#2b2b2b" stroke-width="1.5" />
<line x1="429.5" y1="664" x2="444.5" y2="664" stroke="#2b2b2b" stroke-width="1.5" />
<line x1="429.5" y1="671" x2="444.5" y2="671" stroke="#2b2b2b" stroke-width="1.5" />
<line x1="429.5" y1="677.5" x2="444.5" y2="677.5" stroke="#2b2b2b" stroke-width="1.5" />
<defs><filter id="sh" x="-10%" y="-10%" width="125%" height="125%"><feGaussianBlur in="SourceAlpha" stdDeviation="4"/><feOffset dx="1" dy="3"/><feComponentTransfer><feFuncA type="linear" slope="0.25"/></feComponentTransfer><feMerge><feMergeNode/><feMergeNode in="SourceGraphic"/></feMerge></filter></defs>
<rect x="427.5" y="101.2" width="274.5" height="274" fill="#fff" filter="url(#sh)"/>
<text x="436" y="126.2" font-size="16.3" fill="#2d2d2d" font-weight="bold" textLength="71.5" lengthAdjust="spacingAndGlyphs" >Pocketing</text>
<line x1="427.5" y1="136.3" x2="702" y2="136.3" stroke="#dedede" stroke-width="1.2" />
<rect x="632" y="101.2" width="34.7" height="34.7" fill="#0b8a1e" />
<path d="M641.5,118.5 L647,124.5 L657.5,112.5" fill="none" stroke="#fff" stroke-width="3.4" />
<path d="M678,112.5 L691.5,125.5 M691.5,112.5 L678,125.5" fill="none" stroke="#c8202a" stroke-width="3" />
<rect x="431.8" y="143.6" width="233.8" height="52.9" fill="#fff" stroke="#dcdcdc" stroke-width="1"/>
<text x="439" y="163.1" font-size="14.4" fill="#555" textLength="72" lengthAdjust="spacingAndGlyphs" >Sketch plane</text>
<text x="439.7" y="186.9" font-size="16.2" fill="#444" textLength="126" lengthAdjust="spacingAndGlyphs" >Face of Extrude 1</text>
<path d="M642,178 L651,187 M651,178 L642,187" fill="none" stroke="#555" stroke-width="1.4" />
<circle cx="682.5" cy="158.7" r="10.3" fill="none" stroke="#2b2b2b" stroke-width="1.3" />
<circle cx="682.5" cy="158.7" r="8" fill="none" stroke="#2b2b2b" stroke-width="1.1" />
<path d="M682.5,152 L682.5,159 L689,159" fill="none" stroke="#2b2b2b" stroke-width="1.6" />
<rect x="432.5" y="214.5" width="14.2" height="14" fill="#fff" rx="3" stroke="#777" stroke-width="1.2"/>
<text x="452.9" y="226.9" font-size="16.2" fill="#444" textLength="132.5" lengthAdjust="spacingAndGlyphs" >Disable imprinting</text>
<rect x="432.5" y="248.3" width="14.2" height="14" fill="#fff" rx="3" stroke="#777" stroke-width="1.2"/>
<text x="452.9" y="260.7" font-size="16.2" fill="#444" textLength="126" lengthAdjust="spacingAndGlyphs" >Show constraints</text>
<rect x="432.5" y="282.2" width="14.2" height="14" fill="#fff" rx="3" stroke="#777" stroke-width="1.2"/>
<text x="452.9" y="294.59999999999997" font-size="16.2" fill="#444" textLength="131.2" lengthAdjust="spacingAndGlyphs" >Show expressions</text>
<rect x="432" y="316.2" width="15" height="14.4" fill="#1a55b8" rx="3"/>
<path d="M435.5,323.4 L438.5,326.4 L443.5,320.4" fill="none" stroke="#fff" stroke-width="2" />
<text x="452.9" y="328.79999999999995" font-size="16.2" fill="#444" textLength="129.8" lengthAdjust="spacingAndGlyphs" >Show overdefined</text>
<rect x="609.5" y="344.5" width="59.8" height="25.9" fill="#fff" rx="4" stroke="#b9b9b9" stroke-width="1"/>
<text x="623" y="363.1" font-size="15.6" fill="#333" textLength="32" lengthAdjust="spacingAndGlyphs" >Final</text>
<circle cx="688.9" cy="362" r="7.8" fill="#a6a6a6" stroke="none" stroke-width="1" />
<text x="688.9" y="366.8" font-size="11" fill="#fff" font-weight="bold" text-anchor="middle" >?</text>
<path d="M2278.4,128.2 L2286.8,117 L2295.2,128.2 Z" fill="#e1e4e8" stroke="none" stroke-width="1" />
<path d="M2276.6,291 L2295.2,291 L2286,303 Z" fill="#e1e4e8" stroke="none" stroke-width="1" />
<path d="M2205.8,200.8 L2205.8,217.5 L2192.8,209 Z" fill="#e1e4e8" stroke="none" stroke-width="1" />
<path d="M2366,200.8 L2366,217.5 L2379,209 Z" fill="#e1e4e8" stroke="none" stroke-width="1" />
<path d="M2225,152 Q2240,137 2260,132" fill="none" stroke="#e1e4e8" stroke-width="5" />
<path d="M2219,157 L2221,143 L2232,152 Z" fill="#e1e4e8" stroke="none" stroke-width="1" />
<path d="M2347,152 Q2332,137 2312,132" fill="none" stroke="#e1e4e8" stroke-width="5" />
<path d="M2353.8,157 L2351,143 L2340,152 Z" fill="#e1e4e8" stroke="none" stroke-width="1" />
<path d="M2264,174.2 L2308.8,174.2 L2321.4,187.5 L2321.4,231 L2308.8,244.5 L2264,244.5 L2252.3,231 L2252.3,187.5 Z" fill="#e1e4e8" stroke="none" stroke-width="1" />
<rect x="2259.6" y="181.6" width="54.3" height="56.2" fill="#fff" rx="13"/>
<text x="2268.8" y="215.6" font-size="16.5" fill="#444" textLength="35" lengthAdjust="spacingAndGlyphs" >Front</text>
<line x1="2247.7" y1="174.7" x2="2247.7" y2="247.3" stroke="#3d3db0" stroke-width="1.8" />
<line x1="2247" y1="247.3" x2="2321.3" y2="247.3" stroke="#d9534f" stroke-width="1.8" />
<text x="2245" y="167" font-size="15.5" fill="#3d3db0" textLength="7.5" lengthAdjust="spacingAndGlyphs" >Z</text>
<text x="2330.6" y="253.8" font-size="15.5" fill="#d9534f" textLength="8" lengthAdjust="spacingAndGlyphs" >X</text>
<path d="M2331,284.5 L2341.8,280.8 L2352.8,284.5 L2352.8,298.5 L2341.8,303 L2331,298.5 Z" fill="#d8d8d8" stroke="#2b2b2b" stroke-width="1.3" />
<path d="M2331,284.5 L2341.8,288.5 L2352.8,284.5 M2341.8,288.5 L2341.8,303" fill="none" stroke="#2b2b2b" stroke-width="1.2" />
<path d="M2331,284.5 L2341.8,288.5 L2341.8,303 L2331,298.5 Z" fill="#9e9e9e" stroke="none" stroke-width="1" />
<path d="M2331,284.5 L2341.8,280.8 L2352.8,284.5 L2341.8,288.5 Z" fill="#f6f6f6" stroke="none" stroke-width="1" />
<path d="M2331,284.5 L2341.8,280.8 L2352.8,284.5 L2352.8,298.5 L2341.8,303 L2331,298.5 Z M2331,284.5 L2341.8,288.5 L2352.8,284.5 M2341.8,288.5 L2341.8,303" fill="none" stroke="#2b2b2b" stroke-width="1.2" />
<path d="M2364,290 L2373,290 L2368.5,294.4 Z" fill="#2b2b2b" stroke="none" stroke-width="1" />
<rect x="2359.2" y="535.2" width="40" height="165.3" fill="#fff" stroke="#c9c9c9" stroke-width="1"/>
<line x1="2359.2" y1="576.5" x2="2400" y2="576.5" stroke="#c9c9c9" stroke-width="1" />
<line x1="2359.2" y1="617.8" x2="2400" y2="617.8" stroke="#c9c9c9" stroke-width="1" />
<line x1="2359.2" y1="659.2" x2="2400" y2="659.2" stroke="#c9c9c9" stroke-width="1" />
<rect x="2359.2" y="714.3" width="40" height="82.7" fill="#fff" stroke="#c9c9c9" stroke-width="1"/>
<line x1="2359.2" y1="755.2" x2="2400" y2="755.2" stroke="#c9c9c9" stroke-width="1" />
<path d="M2370,561 L2380,546 L2388,550 L2382,561 Z" fill="#6a6a6a" stroke="none" stroke-width="1" />
<path d="M2378,561 L2386,549 L2392,555 L2389,561 Z" fill="#9a9a9a" stroke="none" stroke-width="1" />
<rect x="2368" y="561" width="24" height="7" fill="#e6e6e6" stroke="#555" stroke-width="1" rx="1.5"/>
<circle cx="2372" cy="564.5" r="1.2" fill="#555" stroke="none" stroke-width="1" />
<rect x="2367.0" y="587.0" width="3" height="3" fill="#2f6fd0" />
<rect x="2370.3" y="587.0" width="3" height="3" fill="#2f6fd0" />
<rect x="2373.6" y="587.0" width="3" height="3" fill="#2f6fd0" />
<rect x="2367.0" y="590.3" width="3" height="3" fill="#2f6fd0" />
<rect x="2370.3" y="590.3" width="3" height="3" fill="#2f6fd0" />
<rect x="2373.6" y="590.3" width="3" height="3" fill="#2f6fd0" />
<rect x="2367.0" y="593.6" width="3" height="3" fill="#2f6fd0" />
<rect x="2370.3" y="593.6" width="3" height="3" fill="#2f6fd0" />
<rect x="2373.6" y="593.6" width="3" height="3" fill="#2f6fd0" />
<path d="M2374,596 L2382,592 L2390,596 L2390,605 L2382,609.5 L2374,605 Z M2374,596 L2382,600 L2390,596 M2382,600 L2382,609.5" fill="none" stroke="#2b2b2b" stroke-width="1.2" />
<rect x="2367.0" y="628.0" width="3" height="3" fill="#555" />
<rect x="2370.3" y="628.0" width="3" height="3" fill="#555" />
<rect x="2373.6" y="628.0" width="3" height="3" fill="#555" />
<rect x="2367.0" y="631.3" width="3" height="3" fill="#555" />
<rect x="2370.3" y="631.3" width="3" height="3" fill="#555" />
<rect x="2373.6" y="631.3" width="3" height="3" fill="#555" />
<rect x="2367.0" y="634.6" width="3" height="3" fill="#555" />
<rect x="2370.3" y="634.6" width="3" height="3" fill="#555" />
<rect x="2373.6" y="634.6" width="3" height="3" fill="#555" />
<path d="M2376,635 L2383,632 L2390,635 L2390,642 L2383,645 L2376,642 Z M2376,635 L2383,638 L2390,635 M2383,638 L2383,645" fill="#fff" stroke="#2b2b2b" stroke-width="1.1" />
<path d="M2370,638 Q2367,642 2370,648 M2393,634 Q2396,640 2393,647" fill="none" stroke="#2b2b2b" stroke-width="1.1" />
<rect x="2368.0" y="669.0" width="3" height="3" fill="#555" />
<rect x="2371.3" y="669.0" width="3" height="3" fill="#555" />
<rect x="2374.6" y="669.0" width="3" height="3" fill="#555" />
<rect x="2368.0" y="672.3" width="3" height="3" fill="#555" />
<rect x="2371.3" y="672.3" width="3" height="3" fill="#555" />
<rect x="2374.6" y="672.3" width="3" height="3" fill="#555" />
<rect x="2368.0" y="675.6" width="3" height="3" fill="#555" />
<rect x="2371.3" y="675.6" width="3" height="3" fill="#555" />
<rect x="2374.6" y="675.6" width="3" height="3" fill="#555" />
<text x="2367" y="692" font-size="17" fill="#2b2b2b" font-weight="bold" textLength="24" lengthAdjust="spacingAndGlyphs" font-family="Liberation Serif" font-style="italic">(x)</text>
<rect x="2365" y="721" width="29" height="28" fill="#d8d8d8" rx="4"/>
<path d="M2379.5,735 L2371.37,726.87 A11.5,11.5 0 0 1 2387.63,726.87 Z" fill="#79c24f" stroke="none" stroke-width="1" />
<path d="M2379.5,735 L2387.63,726.87 A11.5,11.5 0 0 1 2387.63,743.13 Z" fill="#4fb6e8" stroke="none" stroke-width="1" />
<path d="M2379.5,735 L2387.63,743.13 A11.5,11.5 0 0 1 2371.37,743.13 Z" fill="#e9b441" stroke="none" stroke-width="1" />
<path d="M2379.5,735 L2371.37,743.13 A11.5,11.5 0 0 1 2371.37,726.87 Z" fill="#d64b3f" stroke="none" stroke-width="1" />
<rect x="2365.5" y="762" width="28" height="27" fill="#d9d9d9" rx="2"/>
<rect x="2367" y="763.5" width="25" height="24" fill="#1a56c0" stroke="#102a60" stroke-width="1.2"/>
<text x="2368.3" y="782.5" font-size="16" fill="#fff" font-weight="bold" textLength="22.5" lengthAdjust="spacingAndGlyphs" font-family="Liberation Serif">MK</text>
<line x1="413" y1="1247.5" x2="2262" y2="1247.5" stroke="#c9dcee" stroke-width="1.5" />
<path d="M2277,1241 L2277,1246.5 L2293,1246.5 Q2297,1246 2296.5,1240 L2296.5,1236 Q2296,1231.5 2289,1231.5 Q2282,1232 2282,1236 L2282,1241 Z" fill="#fff" stroke="#2b2b2b" stroke-width="1.6" />
<path d="M2285,1235.5 Q2289.5,1233.5 2293.5,1236 Q2289,1238.5 2285,1235.5 Z" fill="none" stroke="#2b2b2b" stroke-width="1.2" />
<line x1="2280" y1="1246" x2="2280" y2="1243.5" stroke="#2b2b2b" stroke-width="1" />
<line x1="2283" y1="1246" x2="2283" y2="1243.5" stroke="#2b2b2b" stroke-width="1" />
<line x1="2286" y1="1246" x2="2286" y2="1243.5" stroke="#2b2b2b" stroke-width="1" />
<line x1="2289" y1="1246" x2="2289" y2="1243.5" stroke="#2b2b2b" stroke-width="1" />
<path d="M2317,1246.5 Q2317,1231.5 2329.2,1231.5 Q2341.5,1231.5 2341.5,1246.5 Z" fill="none" stroke="#2b2b2b" stroke-width="1.8" />
<path d="M2323,1246.5 Q2323,1239 2329.2,1239 Q2335.5,1239 2335.5,1246.5" fill="none" stroke="#2b2b2b" stroke-width="1.4" />
<line x1="2340.0253175473053" y1="1240.25" x2="2337.427241335952" y2="1241.75" stroke="#2b2b2b" stroke-width="1" />
<line x1="2335.45" y1="1235.6746824526945" x2="2333.95" y2="1238.2727586640478" stroke="#2b2b2b" stroke-width="1" />
<line x1="2329.2" y1="1234.0" x2="2329.2" y2="1237.0" stroke="#2b2b2b" stroke-width="1" />
<line x1="2322.95" y1="1235.6746824526945" x2="2324.45" y2="1238.2727586640478" stroke="#2b2b2b" stroke-width="1" />
<line x1="2318.3746824526943" y1="1240.25" x2="2320.9727586640474" y2="1241.75" stroke="#2b2b2b" stroke-width="1" />
<line x1="2373" y1="1230.5" x2="2373" y2="1247" stroke="#2b2b2b" stroke-width="1.6" />
<line x1="2363.5" y1="1247.5" x2="2383" y2="1247.5" stroke="#2b2b2b" stroke-width="1.8" />
<line x1="2365" y1="1235" x2="2381" y2="1232.5" stroke="#2b2b2b" stroke-width="1.4" />
<path d="M2364,1243 L2367,1236 L2370,1243 Z M2376,1240.5 L2379,1233.5 L2382,1240.5 Z" fill="none" stroke="#2b2b2b" stroke-width="1.1" />
<line x1="2363.5" y1="1243" x2="2370.5" y2="1243" stroke="#2b2b2b" stroke-width="1.6" />
<line x1="2375.5" y1="1240.5" x2="2382.5" y2="1240.5" stroke="#2b2b2b" stroke-width="1.6" />
<rect x="93.8" y="1257" width="52" height="33.6" fill="#ececec" />
<path d="M137,1257 L285.5,1257 L292.5,1273.8 L285.5,1290.6 L137,1290.6 L144,1273.8 Z" fill="#fff" stroke="none" stroke-width="1" />
<path d="M295,1261 Q295,1257 299,1257 L545.3,1257 L545.3,1290.6 L299,1290.6 Q295,1290.6 295,1286.6 Z" fill="#ebebeb" stroke="none" stroke-width="1" />
<rect x="548.9" y="1257" width="247.8" height="33.6" fill="#fff" />
<rect x="548.9" y="1288.3" width="247.8" height="2.6" fill="#1f55b8" />
<line x1="62" y1="1275" x2="81.3" y2="1275" stroke="#666" stroke-width="3" />
<line x1="71.65" y1="1265.6" x2="71.65" y2="1284.4" stroke="#666" stroke-width="3" />
<path d="M105,1274 L116.5,1262 L122.5,1268 L122.5,1263 L126.5,1263 L126.5,1272 L128,1274 L125.5,1274 L125.5,1283.8 L119.5,1283.8 L119.5,1277 L113.5,1277 L113.5,1283.8 L107.5,1283.8 L107.5,1274 Z" fill="#666" stroke="none" stroke-width="1" />
<path d="M159.2,1281 L159.2,1264 L166,1264 L169,1267 L180.5,1267 L180.5,1281 Z" fill="none" stroke="#333" stroke-width="1.7" />
<text x="189.4" y="1279" font-size="16.8" fill="#6a6a6a" textLength="78.5" lengthAdjust="spacingAndGlyphs" >Exercise 2</text>
<path d="M309,1266.8 L313.5,1262.3 L327.5,1262.3 L331.8,1266.6 L331.8,1284.4 L313.5,1284.4 L309,1280 Z" fill="#fff" stroke="#333" stroke-width="1.4" />
<path d="M309.5,1263.5 L321,1263.5 L325,1267 L313,1267 Z" fill="#b5b5b5" stroke="none" stroke-width="1" />
<path d="M309.5,1263.5 L313,1267 L313,1278 L309.5,1274.5 Z" fill="#6f6f6f" stroke="none" stroke-width="1" />
<rect x="313" y="1267" width="12" height="11" fill="#8c8c8c" />
<path d="M309,1266.8 L313,1267 L325,1267 L325,1278 L313,1278 L313,1267 M313,1278 L309.2,1274.8 M325,1267 L321,1263.2 M313,1284.4 L313,1278 M325,1278 L331.8,1284.4 M313.5,1262.3 L309.2,1266.8 L309.2,1274.8" fill="none" stroke="#333" stroke-width="1.1" />
<text x="337" y="1281.9" font-size="17.6" fill="#777" textLength="158.5" lengthAdjust="spacingAndGlyphs" >Exercise 2 Assembly</text>
<path d="M563,1266.5 L570,1266.5 L570,1284 L563,1284 Z M570,1266.5 L573,1263 L573,1284 M575,1268 L575,1263 L582,1263 L583.5,1264.5 L583.5,1284 L575,1284 Z" fill="none" stroke="#333" stroke-width="1.3" />
<text x="589.6" y="1281.9" font-size="17.6" fill="#333" textLength="168" lengthAdjust="spacingAndGlyphs" >Exercise 2 Part Studio</text>
<path d="M12,1307.2 L21,1305.8 L21,1313.2 L12,1313.2 Z M22.6,1305.5 L32,1304 L32,1313.2 L22.6,1313.2 Z M12,1314.6 L21,1314.6 L21,1322 L12,1320.7 Z M22.6,1314.6 L32,1314.6 L32,1323.6 L22.6,1322.3 Z" fill="#fff" stroke="none" stroke-width="1" />
<rect x="53.75" y="1330" width="190.0" height="2.6" fill="#a8a8a8" />
<path d="M68.75,1313.75 L60.09,1308.75 A10,10 0 0 1 77.41,1308.75 Z" fill="#db4437" stroke="none" stroke-width="1" />
<path d="M68.75,1313.75 L77.41,1308.75 A10,10 0 0 1 68.75,1323.75 Z" fill="#f4c20d" stroke="none" stroke-width="1" />
<path d="M68.75,1313.75 L68.75,1323.75 A10,10 0 0 1 60.09,1308.75 Z" fill="#0f9d58" stroke="none" stroke-width="1" />
<circle cx="68.75" cy="1313.75" r="4.6" fill="#fff" stroke="none" stroke-width="1" />
<circle cx="68.75" cy="1313.75" r="3.6" fill="#4285f4" stroke="none" stroke-width="1" />
<text x="83" y="1320" font-size="15.3" fill="#fff" textLength="154.5" lengthAdjust="spacingAndGlyphs" >MP4 to WEBM | Cloud...</text>
<rect x="248.75" y="1294.5" width="200" height="38" fill="#3c3c3c" />
<rect x="249.25" y="1330" width="199.5" height="2.6" fill="#b0b0b0" />
<path d="M268.75,1313.75 L260.09,1308.75 A10,10 0 0 1 277.41,1308.75 Z" fill="#db4437" stroke="none" stroke-width="1" />
<path d="M268.75,1313.75 L277.41,1308.75 A10,10 0 0 1 268.75,1323.75 Z" fill="#f4c20d" stroke="none" stroke-width="1" />
<path d="M268.75,1313.75 L268.75,1323.75 A10,10 0 0 1 260.09,1308.75 Z" fill="#0f9d58" stroke="none" stroke-width="1" />
<circle cx="268.75" cy="1313.75" r="4.6" fill="#fff" stroke="none" stroke-width="1" />
<circle cx="268.75" cy="1313.75" r="3.6" fill="#4285f4" stroke="none" stroke-width="1" />
<text x="283.75" y="1320" font-size="15.3" fill="#fff" textLength="152.5" lengthAdjust="spacingAndGlyphs" >1B - Practice Exercise ...</text>
<rect x="453.75" y="1330" width="190.0" height="2.6" fill="#a8a8a8" />
<path d="M468.75,1313.75 L460.09,1308.75 A10,10 0 0 1 477.41,1308.75 Z" fill="#db4437" stroke="none" stroke-width="1" />
<path d="M468.75,1313.75 L477.41,1308.75 A10,10 0 0 1 468.75,1323.75 Z" fill="#f4c20d" stroke="none" stroke-width="1" />
<path d="M468.75,1313.75 L468.75,1323.75 A10,10 0 0 1 460.09,1308.75 Z" fill="#0f9d58" stroke="none" stroke-width="1" />
<circle cx="468.75" cy="1313.75" r="4.6" fill="#fff" stroke="none" stroke-width="1" />
<circle cx="468.75" cy="1313.75" r="3.6" fill="#4285f4" stroke="none" stroke-width="1" />
<text x="483.75" y="1320" font-size="15.3" fill="#fff" textLength="153.5" lengthAdjust="spacingAndGlyphs" >image.png - Squoosh ...</text>
<path d="M664,1308 L670,1317 L674,1306 L681,1313 L676,1323 L668,1320 Z" fill="#e23c3c" stroke="none" stroke-width="1" />
<path d="M663,1315 L671,1309 L677,1318 L669,1322 Z" fill="#2a56d0" stroke="none" stroke-width="1" opacity="0.85"/>
<rect x="701" y="1330" width="190" height="2.6" fill="#a8a8a8" />
<path d="M712,1306 L719.5,1303.5 L723.8,1312 L719,1324 L710,1320 L708.5,1312 Z" fill="#7c5ad9" stroke="none" stroke-width="1" />
<path d="M712,1306 L719.5,1303.5 L716,1318 Z" fill="#a78bf2" stroke="none" stroke-width="1" />
<text x="730" y="1320" font-size="15.3" fill="#fff" textLength="151" lengthAdjust="spacingAndGlyphs" >Lab 1 - BrainVault - O...</text>
<path d="M913,1307 L921,1303.5 L926,1310 L926,1322 L913,1322 Z M917,1313 L922,1313 L922,1318 L917,1318 Z" fill="#c8b065" stroke="none" stroke-width="1" fill-rule="evenodd"/>
<rect x="955" y="1305" width="20" height="15" fill="#c8202a" rx="2"/>
<text x="957" y="1316" font-size="9" fill="#fff" font-weight="bold" textLength="16" lengthAdjust="spacingAndGlyphs" >SW</text>
<text x="957.5" y="1324" font-size="7" fill="#fff" font-weight="bold" textLength="15" lengthAdjust="spacingAndGlyphs" >2022</text>
<path d="M1001,1316 L1010,1310 L1014,1304 L1020,1323 L1014,1318 Z" fill="#e8762b" stroke="none" stroke-width="1" />
<path d="M1001,1316 L1010,1310 L1008,1318 Z" fill="#3a6bc0" stroke="none" stroke-width="1" />
<rect x="1040" y="1330" width="190" height="2.6" fill="#a8a8a8" />
<path d="M1061,1303.5 L1065,1305.5 L1065,1322 L1061,1324 L1049,1315.5 L1046,1318 L1045,1317 L1045,1310 L1046,1309 L1049,1311.5 Z M1061,1309 L1054,1313.5 L1061,1318.5 Z" fill="#2f9ae8" stroke="none" stroke-width="1" fill-rule="evenodd"/>
<text x="1070" y="1320" font-size="15.3" fill="#fff" textLength="152.5" lengthAdjust="spacingAndGlyphs" >● 1B-powerTransmissi...</text>
<rect x="1249.5" y="1304" width="17" height="19" fill="#2b5cb8" rx="2"/>
<rect x="1247.5" y="1307" width="11" height="13" fill="#1a3f8f" />
<text x="1248.5" y="1317.5" font-size="9.5" fill="#fff" font-weight="bold" >W</text>
<rect x="1295.5" y="1304" width="17" height="19" fill="#1e8a4a" rx="2"/>
<rect x="1293.75" y="1307" width="11" height="13" fill="#0f6a33" />
<text x="1295.5" y="1317.5" font-size="9.5" fill="#fff" font-weight="bold" >X</text>
<path d="M1351,1303 L1362.5,1310 L1362.5,1317 L1351,1324 L1342,1317 L1342,1310 Z" fill="#3f79d6" stroke="none" stroke-width="1" />
<rect x="1340" y="1307" width="11" height="13" fill="#1d4fa8" />
<text x="1341.5" y="1317.5" font-size="9.5" fill="#fff" font-weight="bold" >V</text>
<circle cx="1397" cy="1313.75" r="10" fill="#e0512f" stroke="none" stroke-width="1" />
<rect x="1386" y="1307" width="11" height="13" fill="#b83b1e" />
<text x="1387.5" y="1317.5" font-size="9.5" fill="#fff" font-weight="bold" >P</text>
<path d="M1442,1303.5 L1450,1308 L1450,1319 L1442,1324 L1434,1319 L1434,1308 Z" fill="#c6c6c6" stroke="none" stroke-width="1" />
<path d="M1438,1307 L1447,1307 L1440,1318 L1447,1318 L1447,1321 L1437,1321 L1444,1310 L1438,1310 Z" fill="#d42a2a" stroke="none" stroke-width="1" />
<rect x="1471.25" y="1330" width="189.75" height="2.6" fill="#a8a8a8" />
<line x1="1485.6" y1="1304" x2="1485.6" y2="1318" stroke="#3bd28a" stroke-width="1.8" />
<path d="M1480.5,1313 L1485.6,1318.5 L1490.7,1313" fill="none" stroke="#3bd28a" stroke-width="1.8" />
<line x1="1479" y1="1322.5" x2="1492.5" y2="1322.5" stroke="#3bd28a" stroke-width="1.8" />
<text x="1498.75" y="1320" font-size="15.3" fill="#fff" textLength="154.5" lengthAdjust="spacingAndGlyphs" >C:\Users\jjomi\Picture...</text>
<rect x="1671.7" y="1330" width="190.0" height="2.6" fill="#a8a8a8" />
<circle cx="1686.7" cy="1313.75" r="10" fill="#5865f2" stroke="none" stroke-width="1" />
<path d="M1681,1310 Q1686.7,1307.5 1692.4,1310 L1693.5,1317 Q1691,1319 1689.5,1318 L1689,1316.5 Q1686.7,1317.5 1684.4,1316.5 L1684,1318 Q1682.5,1319 1680,1317 Z" fill="#fff" stroke="none" stroke-width="1" />
<text x="1701" y="1320" font-size="15.3" fill="#fff" textLength="155.5" lengthAdjust="spacingAndGlyphs" >#server-development ...</text>
<rect x="1873" y="1330" width="189.69999999999982" height="2.6" fill="#a8a8a8" />
<circle cx="1887.4" cy="1313.75" r="9.8" fill="#f4f4f4" stroke="none" stroke-width="1" />
<rect x="1881.1000000000001" y="1309.45" width="4.5" height="2.6" fill="#36c5f0" />
<rect x="1883.1000000000001" y="1307.45" width="2.6" height="4.5" fill="#36c5f0" />
<rect x="1889.1000000000001" y="1309.45" width="4.5" height="2.6" fill="#2eb67d" />
<rect x="1889.1000000000001" y="1307.45" width="2.6" height="4.5" fill="#2eb67d" />
<rect x="1889.1000000000001" y="1315.45" width="4.5" height="2.6" fill="#ecb22e" />
<rect x="1889.1000000000001" y="1315.45" width="2.6" height="4.5" fill="#ecb22e" />
<rect x="1881.1000000000001" y="1315.45" width="4.5" height="2.6" fill="#e01e5a" />
<rect x="1883.1000000000001" y="1315.45" width="2.6" height="4.5" fill="#e01e5a" />
<text x="1901.7" y="1320" font-size="15.3" fill="#fff" textLength="153.5" lengthAdjust="spacingAndGlyphs" >3dprinters (Channel) -...</text>
<rect x="2074" y="1330" width="190" height="2.6" fill="#a8a8a8" />
<circle cx="2088.5" cy="1313.75" r="9.7" fill="#1ed760" stroke="none" stroke-width="1" />
<path d="M2083.0,1310 Q2088.5,1308 2094.0,1311" fill="none" stroke="#111" stroke-width="1.6" />
<path d="M2084.0,1314 Q2088.5,1312 2093.0,1315" fill="none" stroke="#111" stroke-width="1.6" />
<path d="M2085.0,1317.5 Q2088.5,1315.5 2092.0,1318.5" fill="none" stroke="#111" stroke-width="1.6" />
<text x="2102.7" y="1320" font-size="15.3" fill="#fff" textLength="154" lengthAdjust="spacingAndGlyphs" >Gen Hoshino - Comedy</text>
<rect x="2275" y="1330" width="125" height="2.6" fill="#a8a8a8" />
<path d="M2288,1305 Q2280.5,1305 2280.5,1311 Q2280.5,1314.5 2283.5,1316.5 L2283,1319 L2286,1317.5 Q2287.5,1318 2289,1318 Z" fill="#2dc100" stroke="none" stroke-width="1" />
<circle cx="2294.5" cy="1317.5" r="6" fill="#e8e8e8" stroke="none" stroke-width="1" />
<circle cx="2288.5" cy="1311" r="6.7" fill="#2dc100" stroke="none" stroke-width="1" />
<text x="2304" y="1320" font-size="15.3" fill="#fff" textLength="51.5" lengthAdjust="spacingAndGlyphs" >WeChat</text>
<rect x="0" y="1332.5" width="2400" height="10.5" fill="#000" />
<g fill="none" stroke-width="2">
<path d="M1,1294 L1,1 L2399,1 L2399,1294" stroke="#101010"/>
<path d="M1,1294 L1,1 L2399,1 L2399,1294" stroke="#2ee82e" stroke-dasharray="4.5 4.5"/>
</g>
</svg>
</body></html>
